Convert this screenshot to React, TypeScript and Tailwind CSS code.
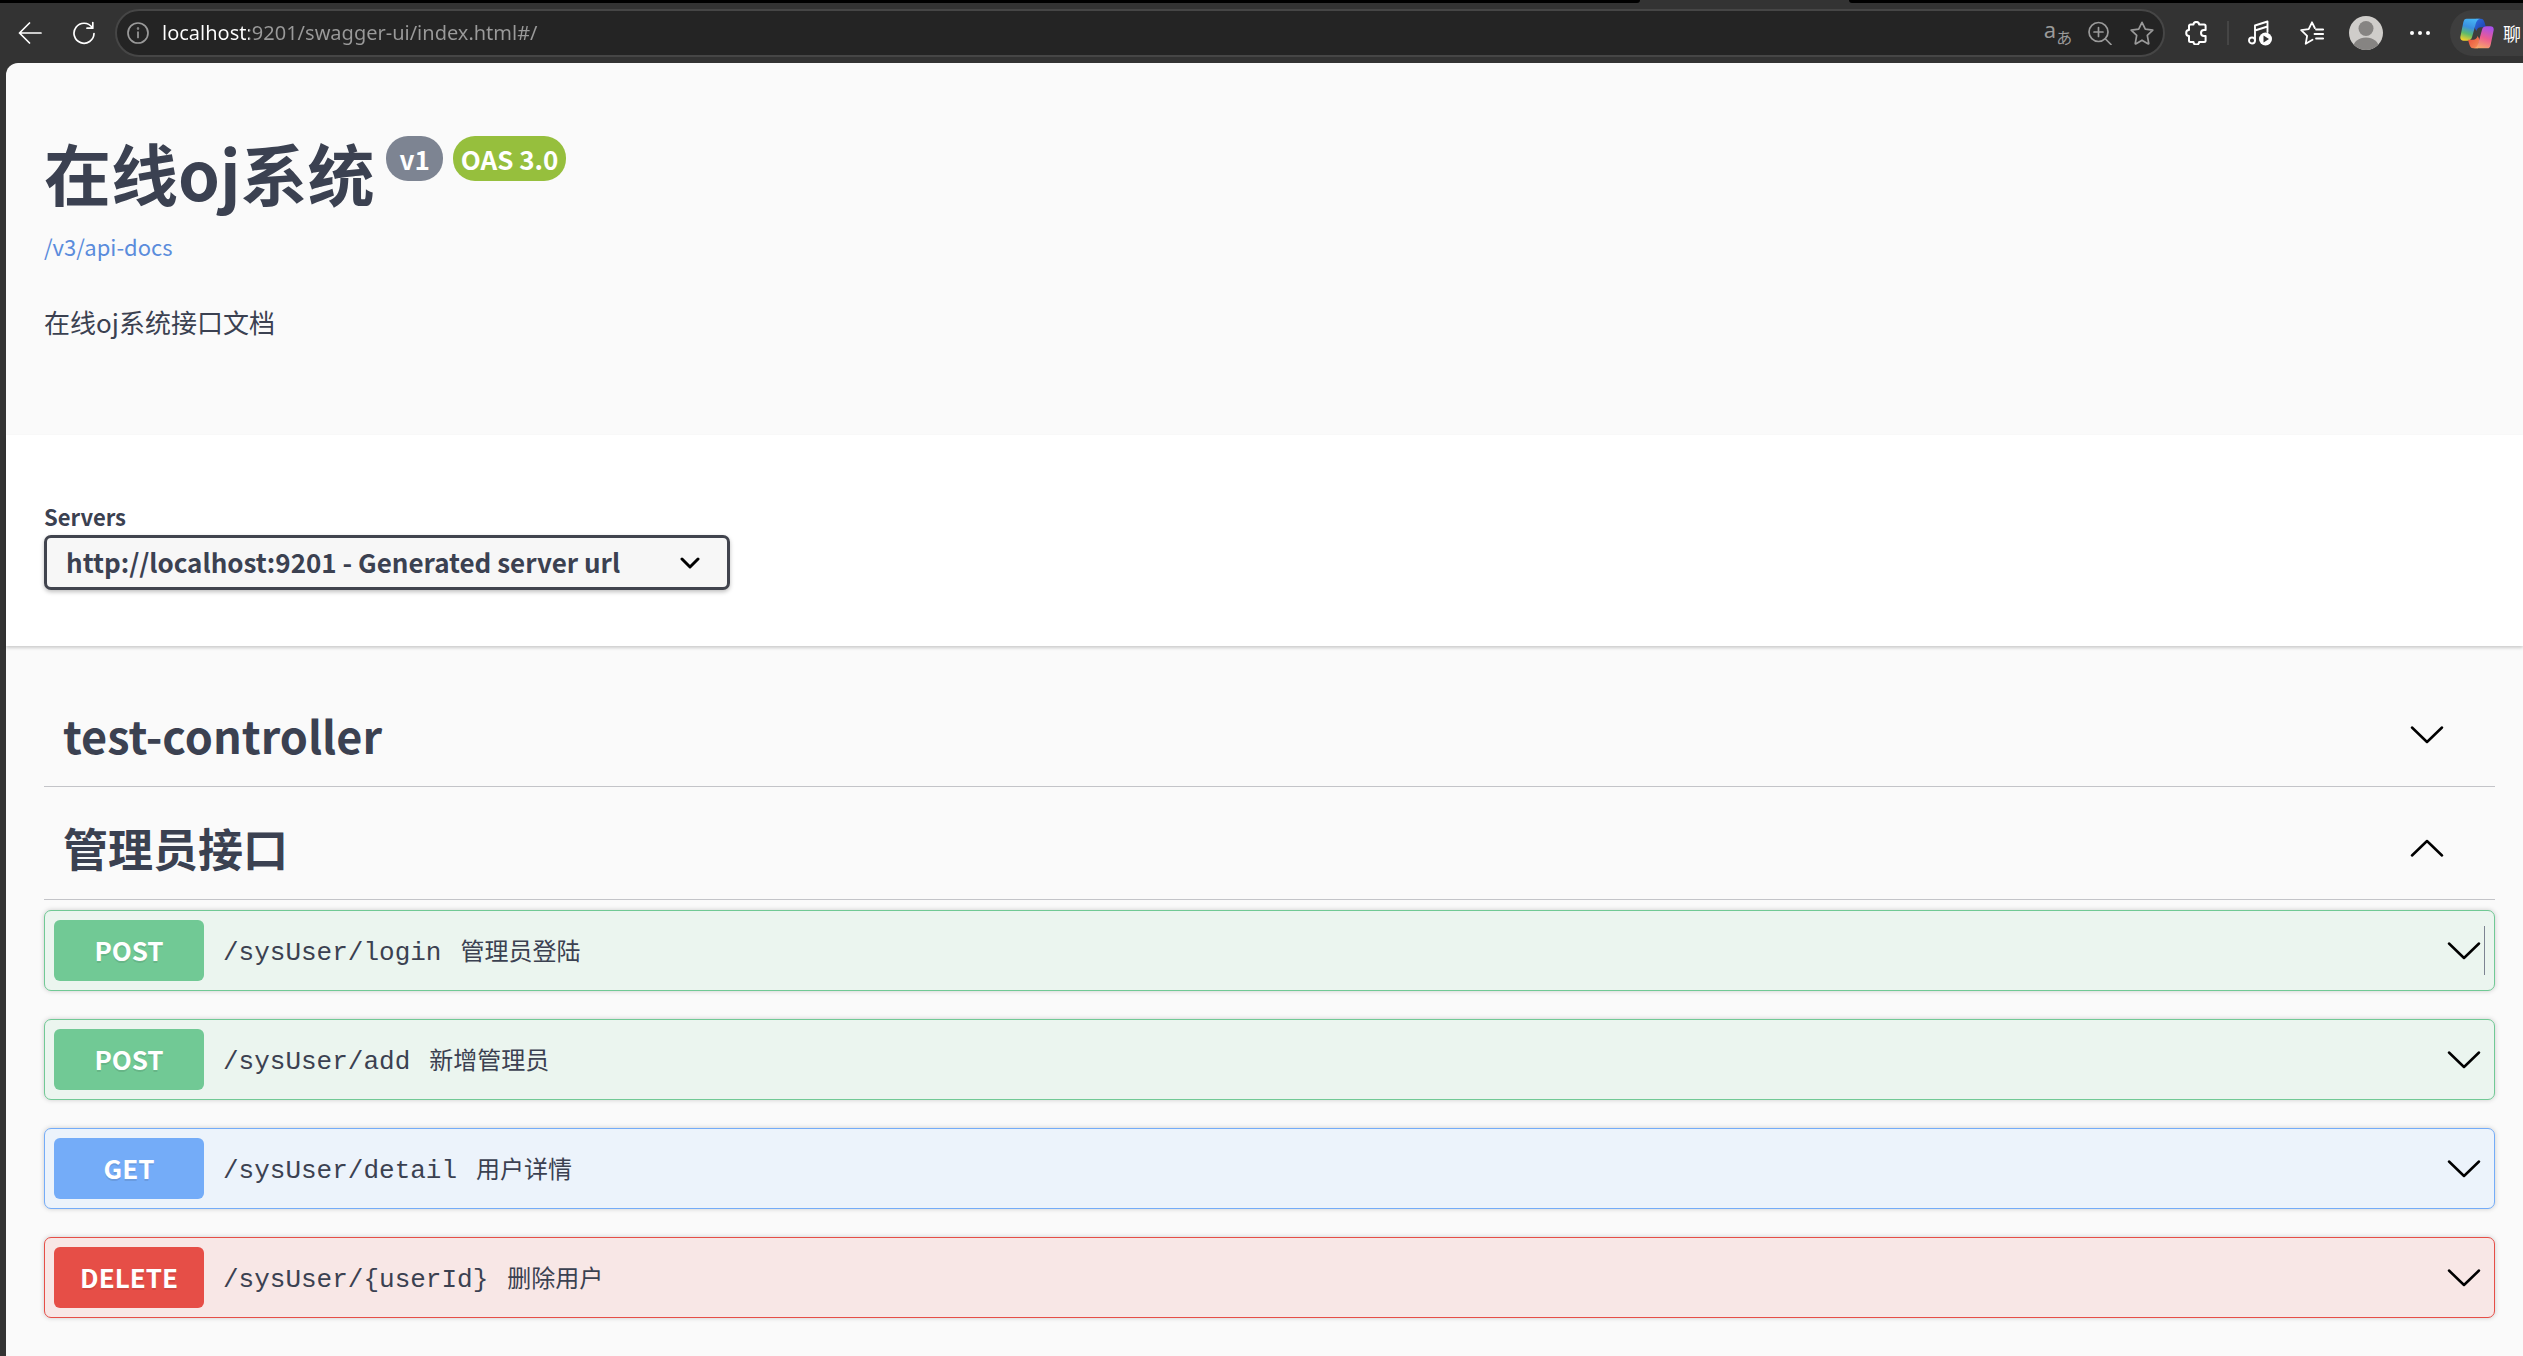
import React, { useState } from "react";

const line = {
  fill: "none",
  stroke: "currentColor",
  strokeWidth: 1.7,
  strokeLinecap: "round" as const,
  strokeLinejoin: "round" as const,
  "aria-hidden": true,
};

function Chevron({ up = false }: { up?: boolean }) {
  return (
    <svg viewBox="0 0 34 18" className={up ? "h-[18px] w-[34px] rotate-180" : "h-[18px] w-[34px]"} {...line} stroke="#000" strokeWidth={2.5}>
      <path d="M2 1.5 17 16 32 1.5" />
    </svg>
  );
}

function IconButton({ label, className, children }: { label: string; className: string; children: React.ReactNode }) {
  return (
    <button type="button" aria-label={label} className={`flex shrink-0 items-center justify-center ${className}`}>
      {children}
    </button>
  );
}

function TabStrip() {
  return (
    <div className="flex h-[3px] bg-[#333333]">
      <div className="w-[65%] rounded-br-[3px] bg-black" />
      <div className="w-[209px]" />
      <div className="flex-1 rounded-bl-[3px] bg-black" />
    </div>
  );
}

function CopilotLogo() {
  const ribbon = "M20 1H60C52 3 49 9 47 17L36 57C34 64 29 67 22 67H11C2 67 -1 61 2 51L10 12C12 4 14 1 20 1Z";
  const fold = "M48 1H62C70 1 72 6 74 13L78 27H62C56 27 52 30 49 38L44 28Z";
  return (
    <svg viewBox="0 0 102 91" className="h-[31px] w-[34px] shrink-0" aria-hidden="true">
      <defs>
        <linearGradient id="cool" x1="0.6" y1="0" x2="0.3" y2="1">
          <stop offset="0" stopColor="#46b4f4" />
          <stop offset="0.4" stopColor="#3a8fe0" />
          <stop offset="0.7" stopColor="#5dba6c" />
          <stop offset="1" stopColor="#f0d02c" />
        </linearGradient>
        <linearGradient id="warm" x1="0.4" y1="1" x2="0.7" y2="0">
          <stop offset="0" stopColor="#a950ea" />
          <stop offset="0.5" stopColor="#ec5c92" />
          <stop offset="1" stopColor="#f7a868" />
        </linearGradient>
        <linearGradient id="foldBlue" x1="0" y1="0" x2="1" y2="1">
          <stop offset="0" stopColor="#2f6fe0" />
          <stop offset="1" stopColor="#1c3aa8" />
        </linearGradient>
        <linearGradient id="foldRed" x1="0" y1="0" x2="1" y2="1">
          <stop offset="0" stopColor="#f5925a" />
          <stop offset="1" stopColor="#e8483a" />
        </linearGradient>
      </defs>
      <path d={fold} fill="url(#foldBlue)" />
      <path d={ribbon} fill="url(#cool)" />
      <g transform="rotate(180 51 45.5)">
        <path d={fold} fill="url(#foldRed)" />
        <path d={ribbon} fill="url(#warm)" />
      </g>
    </svg>
  );
}

function AddressBar() {
  return (
    <div className="ml-[7px] flex h-12 min-w-0 flex-1 items-center rounded-full border-2 border-[#464646] bg-[#242424] text-[#9a9a9a]">
      <IconButton label="Site information" className="h-11 w-[42px]">
        <svg viewBox="0 0 22 22" className="h-[22px] w-[22px]" {...line}>
          <circle cx="11" cy="11" r="10" />
          <path d="M11 10v5.5" />
          <circle cx="11" cy="6.6" r=".4" />
        </svg>
      </IconButton>
      <input
        type="text"
        aria-label="Address"
        defaultValue="localhost:9201/swagger-ui/index.html#/"
        className="ml-[3px] min-w-0 flex-1 bg-[linear-gradient(90deg,#ffffff_87px,#9a9a9a_87px)] bg-clip-text font-['Noto_Sans',sans-serif] text-[20px] leading-8 text-transparent outline-none"
      />
      <IconButton label="Translate" className="h-11 w-[42px] leading-none">
        <span className="pb-2 font-['Noto_Sans',sans-serif] text-[22px]">a</span>
        <span className="pt-2 font-['Noto_Sans_CJK_JP',sans-serif] text-[16px]">あ</span>
      </IconButton>
      <IconButton label="Zoom" className="h-11 w-[42px]">
        <svg viewBox="0 0 24 24" className="h-6 w-6" {...line}>
          <circle cx="10.5" cy="11" r="9.5" />
          <path d="M17.5 18l5.5 5.5M10.5 6.5v9M6 11h9" />
        </svg>
      </IconButton>
      <IconButton label="Add to favorites" className="h-11 w-[42px]">
        <svg viewBox="0 0 24 24" className="h-6 w-6" {...line}>
          <path d="M12 1.3l3.3 6.9 7.5 1-5.5 5.2 1.4 7.7q.2 1-.8.7L12 19.2l-5.9 3.6q-1 .3-.8-.7l1.4-7.7L1.200 9.2l7.5-1z" />
        </svg>
      </IconButton>
    </div>
  );
}

function Toolbar() {
  return (
    <header className="flex h-[60px] items-center overflow-hidden bg-[#333333] text-white">
      <IconButton label="Back" className="h-12 w-[60px]">
        <svg viewBox="0 0 24 22" className="h-[22px] w-6" {...line}>
          <path d="M23 11H1.5M11.5 1 1.5 11l10 10" />
        </svg>
      </IconButton>
      <IconButton label="Refresh" className="h-12 w-12">
        <svg viewBox="0 0 24 24" className="h-6 w-6" {...line}>
          <path d="M20.2 6.5A10 10 0 1 0 22 12.5M20.8 1.5V7.2H15" />
        </svg>
      </IconButton>
      <AddressBar />
      <IconButton label="Extensions" className="h-12 w-[62px]">
        <svg viewBox="0 0 22 24" className="h-6 w-[22px]" {...line} strokeWidth={2}>
          <path d="M5.5 3.5h3a2.8 2.6 0 0 1 5.6 0h5a1.5 1.5 0 0 1 1.5 1.5v4h-1.6a3 3 0 0 0 0 6h1.6v4.5a1.5 1.5 0 0 1-1.5 1.5h-5a2.8 2.6 0 0 1-5.6 0h-3a1.5 1.5 0 0 1-1.5-1.5V15a2.8 3 0 0 1 0-6V5a1.5 1.5 0 0 1 1.5-1.5z" />
        </svg>
      </IconButton>
      <div className="h-6 w-0.5 bg-[#454545]" />
      <IconButton label="Media controls" className="h-12 w-[62px]">
        <svg viewBox="0 0 25 26" className="h-[26px] w-[25px]" {...line} strokeWidth={1.9}>
          <circle cx="4" cy="20.5" r="3" />
          <path d="M7 20.5V5.5L19.5 1.5V12M7 10.5l12.5-4" />
          <circle cx="17.5" cy="19" r="6.5" fill="currentColor" stroke="none" />
          <path d="M15.5 15.5v7l5.5-3.5z" fill="#333333" stroke="none" />
        </svg>
      </IconButton>
      <IconButton label="Favorites" className="h-12 w-[42px]">
        <svg viewBox="0 0 24 24" className="h-6 w-6" {...line} strokeWidth={1.8}>
          <path d="M12.5 18.8l-6.8 4 1.400-7.900L1.2 9.2l7.500-1L12 1.3l2.8 5.700M16 8.5h7.2M14.5 13h8.700M16 17.5h7.2" />
        </svg>
      </IconButton>
      <IconButton label="Profile" className="h-12 w-[66px]">
        <svg viewBox="0 0 34 34" className="h-[34px] w-[34px]" aria-hidden="true">
          <clipPath id="avatar"><circle cx="17" cy="17" r="17" /></clipPath>
          <g clipPath="url(#avatar)">
            <rect width="34" height="34" fill="#cfcdca" />
            <circle cx="17" cy="12.5" r="7.5" fill="#868482" />
            <ellipse cx="17" cy="32" rx="13" ry="10.5" fill="#868482" />
          </g>
        </svg>
      </IconButton>
      <IconButton label="Settings and more" className="h-12 w-[42px]">
        <svg viewBox="0 0 20 4" className="h-1 w-5" fill="currentColor" aria-hidden="true">
          <circle cx="2" cy="2" r="2" />
          <circle cx="10" cy="2" r="2" />
          <circle cx="18" cy="2" r="2" />
        </svg>
      </IconButton>
      <button type="button" className="ml-[9px] flex h-[46px] w-[73px] shrink-0 items-center gap-[9px] rounded-l-full bg-[#3e3e3e] pl-2.5 font-['Noto_Sans_CJK_SC',sans-serif] text-[18px] whitespace-nowrap">
        <CopilotLogo />
        <span>聊</span>
      </button>
    </header>
  );
}

function Info() {
  return (
    <section className="pt-16 pr-7 pb-[94px] pl-[38px]">
      <div className="flex items-start gap-2.5">
        <h1 className="mr-0.5 text-[67px] leading-[90px] font-bold">在线oj系统</h1>
        <span className="mt-[9px] rounded-[22px] bg-[#7d8492] px-[13px] text-[26px] leading-[45px] font-bold text-white">v1</span>
        <span className="mt-[9px] rounded-[22px] bg-[#96bf3d] px-2 text-[26px] leading-[45px] font-bold text-white">OAS 3.0</span>
      </div>
      <a href="#/v3/api-docs" className="mt-3 block w-fit text-[22px] leading-[34px] text-[#5a8cdc]">/v3/api-docs</a>
      <p className="mt-10 text-[26px] leading-[38px]">在线oj系统接口文档</p>
    </section>
  );
}

function Servers() {
  return (
    <section className="bg-white pt-[65px] pr-7 pb-14 pl-[38px] shadow-[0_2px_3px_rgba(0,0,0,0.18)]">
      <label htmlFor="servers" className="block text-[22px] leading-8 font-bold">Servers</label>
      <div className="relative mt-[3px] w-[686px] max-w-full">
        <select id="servers" className="block h-[55px] w-full appearance-none rounded-[7px] border-3 border-[#41444e] bg-[#f7f7f7] pr-16 pb-0.5 pl-[19px] text-[26px] font-bold shadow-[0_2px_4px_rgba(0,0,0,0.25)]">
          <option>http://localhost:9201 - Generated server url</option>
        </select>
        <svg viewBox="0 0 20 12" className="pointer-events-none absolute top-[22px] right-[30px] h-3 w-5" {...line} stroke="#000" strokeWidth={3}>
          <path d="M2 2l8 8 8-8" />
        </svg>
      </div>
    </section>
  );
}

function TagHeader({ name, open, onToggle }: { name: string; open: boolean; onToggle: () => void }) {
  return (
    <div className="flex items-center justify-between border-b border-[#c3c4c8] py-[19px] pr-[51px] pl-[19px]">
      <h2 className="text-[45px] leading-16 font-bold">{name}</h2>
      <button type="button" aria-label={name} aria-expanded={open} onClick={onToggle}>
        <Chevron up={open} />
      </button>
    </div>
  );
}

type Op = { method: string; path: string; summary: string; box: string; badge: string; focused?: boolean };

const ops: Op[] = [
  { method: "POST", path: "/sysUser/login", summary: "管理员登陆", box: "border-[#71c995] bg-[#ebf5ef]", badge: "bg-[#71c995]", focused: true },
  { method: "POST", path: "/sysUser/add", summary: "新增管理员", box: "border-[#71c995] bg-[#ebf5ef]", badge: "bg-[#71c995]" },
  { method: "GET", path: "/sysUser/detail", summary: "用户详情", box: "border-[#74acf8] bg-[#ecf3fb]", badge: "bg-[#74acf8]" },
  { method: "DELETE", path: "/sysUser/{userId}", summary: "删除用户", box: "border-[#e64e47] bg-[#f8e7e6]", badge: "bg-[#e64e47]" },
];

function OpBlock({ op }: { op: Op }) {
  return (
    <div className={`flex items-center rounded-[7px] border px-[9px] py-[9px] shadow-[0_0_5px_rgba(0,0,0,0.19)] ${op.box}`}>
      <span className={`w-[150px] rounded-md pb-0.5 text-center text-[26px] leading-[59px] font-bold text-white text-shadow-[0_2px_0_rgb(0_0_0/0.1)] ${op.badge}`}>
        {op.method}
      </span>
      <div className="flex flex-1 items-baseline gap-[19px] pt-[3px] pl-[19px]">
        <span className="font-['Liberation_Mono',monospace] text-[26px]">{op.path}</span>
        <span className="text-[24px]">{op.summary}</span>
      </div>
      <button
        type="button"
        aria-label={`${op.method} ${op.path}`}
        className={`flex h-[49px] items-center border-r pr-[3px] ${op.focused ? "border-[#7d8492]" : "border-transparent"}`}
      >
        <Chevron />
      </button>
    </div>
  );
}

export default function App() {
  const [testOpen, setTestOpen] = useState(false);
  const [adminOpen, setAdminOpen] = useState(true);
  return (
    <div className="flex min-h-screen flex-col bg-[#333333] font-['Noto_Sans_CJK_SC',sans-serif] text-[#3b4151]">
      <TabStrip />
      <Toolbar />
      <main className="ml-1.5 flex-1 rounded-tl-xl bg-[#fafafa]">
        <Info />
        <Servers />
        <div className="flex flex-col gap-2.5 pt-[38px] pr-7 pb-9 pl-[38px]">
          <TagHeader name="test-controller" open={testOpen} onToggle={() => setTestOpen(!testOpen)} />
          <TagHeader name="管理员接口" open={adminOpen} onToggle={() => setAdminOpen(!adminOpen)} />
          {adminOpen && (
            <div className="flex flex-col gap-7">
              {ops.map((op) => (
                <OpBlock key={op.path} op={op} />
              ))}
            </div>
          )}
        </div>
      </main>
    </div>
  );
}
